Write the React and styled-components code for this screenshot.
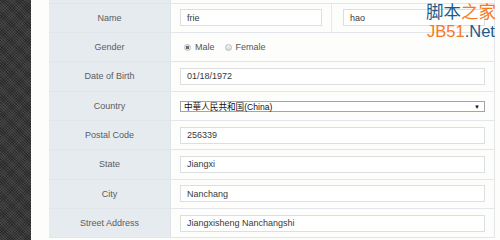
import React from "react";
import styled, { createGlobalStyle } from "styled-components";

const Global = createGlobalStyle`
  html, body { margin: 0; padding: 0; background: #fdfdfb; }
  body { width: 500px; height: 240px; overflow: hidden; font-family: "Liberation Sans", Arial, "Noto Sans CJK SC", sans-serif; }
`;

const Page = styled.div`
  position: relative;
  display: flex;
  width: 500px;
  height: 240px;
  overflow: hidden;
  background: #fdfdfb;
`;

const Sidebar = styled.div`
  width: 31px;
  flex: none;
  background-color: #353535;
  background-image:
    repeating-linear-gradient(45deg, rgba(255,255,255,0.09) 0 1px, transparent 1px 2px),
    repeating-linear-gradient(-45deg, rgba(0,0,0,0.25) 0 1px, transparent 1px 2px);
`;

const Panel = styled.div`
  flex: 1;
  padding-left: 18px;
`;

const Table = styled.div`
  width: 446px;
  margin-top: -25.67px;
  border-right: 1px solid #e3e6e8;
  box-sizing: border-box;
`;

const Row = styled.div`
  display: grid;
  grid-template-columns: 122px 1fr;
  height: 29.33px;
  box-sizing: border-box;
  border-bottom: 1px solid #e2e6ea;
`;

const Label = styled.div`
  background: #e6ebf0;
  border-right: 1px solid #dfe4e8;
  display: flex;
  align-items: center;
  justify-content: center;
  font-size: 9px;
  color: #5c5c5c;
`;

const Value = styled.div`
  display: flex;
  align-items: center;
  padding: 0 9px 0 9px;
  background: #fdfdfb;
`;

const Split = styled.div`
  display: grid;
  grid-template-columns: 161px 1fr;
  background: #fdfdfb;
`;

const SplitCell = styled.div`
  display: flex;
  align-items: center;
  padding: 0 9px 0 ${p => (p.$first ? 9 : 11)}px;
  border-right: ${p => (p.$first ? "1px solid #e6e8ea" : "none")};
`;

const Input = styled.div`
  flex: 1;
  height: 17px;
  box-sizing: border-box;
  border: 1px solid #dcdfe0;
  background: #fff;
  display: flex;
  align-items: center;
  padding-left: 6px;
  font-size: 9px;
  color: #3a3a3a;
`;

const Select = styled.div`
  flex: 1;
  height: 11px;
  margin-top: 2px;
  box-sizing: border-box;
  border: 1px solid #a4a4a4;
  background: #fff;
  display: flex;
  align-items: center;
  justify-content: space-between;
  padding: 0 4px 0 3px;
  font-size: 8.6px;
  color: #111;
  line-height: 1;
`;

const Arrow = styled.span`
  font-size: 6px;
  color: #111;
`;

const Radio = styled.span`
  width: 7px;
  height: 7px;
  border-radius: 50%;
  box-sizing: border-box;
  border: 1px solid #b9bcbf;
  background: ${p => (p.$on ? "radial-gradient(circle, #6a6a6a 0 1.6px, #e8e8e8 2px)" : "linear-gradient(#f4f4f4, #d8d8d8)")};
  margin: 0 4px 0 4px;
`;

const RadioText = styled.span`
  font-size: 9px;
  color: #555;
  margin-right: 6px;
`;

const Watermark = styled.div`
  position: absolute;
  right: 4px;
  top: 0px;
  display: flex;
  flex-direction: column;
  align-items: center;
  white-space: nowrap;
  pointer-events: none;
`;

const WmCn = styled.div`
  font-family: "Noto Sans CJK SC", sans-serif;
  font-size: 17.5px;
  line-height: 22px;
`;

const WmEn = styled.div`
  font-family: "Liberation Sans", Arial, sans-serif;
  font-size: 16.5px;
  line-height: 16px;
  margin-top: 1px;
`;

const Blue = styled.span` color: #1d5a8a; `;
const Orange = styled.span` color: #f7781e; `;

const rows = [
  ["Gender", "gender"],
  ["Date of Birth", "01/18/1972"],
  ["Country", "country"],
  ["Postal Code", "256339"],
  ["State", "Jiangxi"],
  ["City", "Nanchang"],
  ["Street Address", "Jiangxisheng Nanchangshi"],
];

export default function App() {
  return (
    <>
      <Global />
      <Page>
        <Sidebar />
        <Panel>
          <Table>
            <Row>
              <Label />
              <Value />
            </Row>
            <Row>
              <Label>Name</Label>
              <Split>
                <SplitCell $first>
                  <Input>frie</Input>
                </SplitCell>
                <SplitCell>
                  <Input>hao</Input>
                </SplitCell>
              </Split>
            </Row>
            {rows.map(([label, val]) => (
              <Row key={label}>
                <Label>{label}</Label>
                <Value>
                  {val === "gender" ? (
                    <>
                      <Radio $on />
                      <RadioText>Male</RadioText>
                      <Radio />
                      <RadioText>Female</RadioText>
                    </>
                  ) : val === "country" ? (
                    <Select>
                      <span>中華人民共和国(China)</span>
                      <Arrow>▼</Arrow>
                    </Select>
                  ) : (
                    <Input>{val}</Input>
                  )}
                </Value>
              </Row>
            ))}
          </Table>
        </Panel>
        <Watermark>
          <WmCn>
            <Blue>脚本</Blue>
            <Orange>之家</Orange>
          </WmCn>
          <WmEn>
            <Orange>JB51</Orange>
            <Blue>.Net</Blue>
          </WmEn>
        </Watermark>
      </Page>
    </>
  );
}
